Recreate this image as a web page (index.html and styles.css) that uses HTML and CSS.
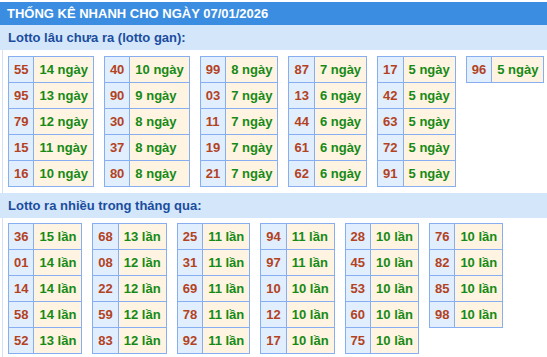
FILE: index.html
```html
<!DOCTYPE html>
<html lang="vi">
<head>
<meta charset="utf-8">
<title>Thống kê nhanh</title>
<link rel="stylesheet" href="styles.css">
</head>
<body>
<div class="title">THỐNG KÊ NHANH CHO NGÀY 07/01/2026</div>
<div class="box">
  <div class="sec-head">Lotto lâu chưa ra (lotto gan):</div>
  <div class="grid">
    <table class="tb"><tr><td class="n">55</td><td class="v">14 ngày</td></tr><tr><td class="n">95</td><td class="v">13 ngày</td></tr><tr><td class="n">79</td><td class="v">12 ngày</td></tr><tr><td class="n">15</td><td class="v">11 ngày</td></tr><tr><td class="n">16</td><td class="v">10 ngày</td></tr></table>
    <table class="tb"><tr><td class="n">40</td><td class="v">10 ngày</td></tr><tr><td class="n">90</td><td class="v">9 ngày</td></tr><tr><td class="n">30</td><td class="v">8 ngày</td></tr><tr><td class="n">37</td><td class="v">8 ngày</td></tr><tr><td class="n">80</td><td class="v">8 ngày</td></tr></table>
    <table class="tb"><tr><td class="n">99</td><td class="v">8 ngày</td></tr><tr><td class="n">03</td><td class="v">7 ngày</td></tr><tr><td class="n">11</td><td class="v">7 ngày</td></tr><tr><td class="n">19</td><td class="v">7 ngày</td></tr><tr><td class="n">21</td><td class="v">7 ngày</td></tr></table>
    <table class="tb"><tr><td class="n">87</td><td class="v">7 ngày</td></tr><tr><td class="n">13</td><td class="v">6 ngày</td></tr><tr><td class="n">44</td><td class="v">6 ngày</td></tr><tr><td class="n">61</td><td class="v">6 ngày</td></tr><tr><td class="n">62</td><td class="v">6 ngày</td></tr></table>
    <table class="tb"><tr><td class="n">17</td><td class="v">5 ngày</td></tr><tr><td class="n">42</td><td class="v">5 ngày</td></tr><tr><td class="n">63</td><td class="v">5 ngày</td></tr><tr><td class="n">72</td><td class="v">5 ngày</td></tr><tr><td class="n">91</td><td class="v">5 ngày</td></tr></table>
    <table class="tb"><tr><td class="n">96</td><td class="v">5 ngày</td></tr></table>
  </div>
  <div class="sec-head">Lotto ra nhiều trong tháng qua:</div>
  <div class="grid grid2">
    <table class="tb"><tr><td class="n">36</td><td class="v">15 lần</td></tr><tr><td class="n">01</td><td class="v">14 lần</td></tr><tr><td class="n">14</td><td class="v">14 lần</td></tr><tr><td class="n">58</td><td class="v">14 lần</td></tr><tr><td class="n">52</td><td class="v">13 lần</td></tr></table>
    <table class="tb"><tr><td class="n">68</td><td class="v">13 lần</td></tr><tr><td class="n">08</td><td class="v">12 lần</td></tr><tr><td class="n">22</td><td class="v">12 lần</td></tr><tr><td class="n">59</td><td class="v">12 lần</td></tr><tr><td class="n">83</td><td class="v">12 lần</td></tr></table>
    <table class="tb"><tr><td class="n">25</td><td class="v">11 lần</td></tr><tr><td class="n">31</td><td class="v">11 lần</td></tr><tr><td class="n">69</td><td class="v">11 lần</td></tr><tr><td class="n">78</td><td class="v">11 lần</td></tr><tr><td class="n">92</td><td class="v">11 lần</td></tr></table>
    <table class="tb"><tr><td class="n">94</td><td class="v">11 lần</td></tr><tr><td class="n">97</td><td class="v">11 lần</td></tr><tr><td class="n">10</td><td class="v">10 lần</td></tr><tr><td class="n">12</td><td class="v">10 lần</td></tr><tr><td class="n">17</td><td class="v">10 lần</td></tr></table>
    <table class="tb"><tr><td class="n">28</td><td class="v">10 lần</td></tr><tr><td class="n">45</td><td class="v">10 lần</td></tr><tr><td class="n">53</td><td class="v">10 lần</td></tr><tr><td class="n">60</td><td class="v">10 lần</td></tr><tr><td class="n">75</td><td class="v">10 lần</td></tr></table>
    <table class="tb"><tr><td class="n">76</td><td class="v">10 lần</td></tr><tr><td class="n">82</td><td class="v">10 lần</td></tr><tr><td class="n">85</td><td class="v">10 lần</td></tr><tr><td class="n">98</td><td class="v">10 lần</td></tr></table>
  </div>
</div>
</body>
</html>
```
FILE: styles.css
```css
html, body {
  margin: 0;
  padding: 0;
  background: #ffffff;
}
body {
  font-family: "Liberation Sans", Arial, sans-serif;
  font-size: 13px;
  font-weight: bold;
}
.title {
  margin-top: 2px;
  height: 23px;
  line-height: 23px;
  padding-left: 7px;
  background: #3a8de0;
  color: #ffffff;
  white-space: nowrap;
}
.box {
  border-left: 1px solid #d3e2f2;
  margin-left: 2px;
}
.sec-head {
  height: 25px;
  line-height: 25px;
  margin-left: -3px;
  padding-left: 8px;
  background: #d4e7fa;
  color: #1b4d9e;
}
.grid {
  display: flex;
  align-items: flex-start;
  gap: 10px;
  padding: 6px 0 6px 5px;
}
.grid2 {
  padding-top: 5px;
}
.tb {
  border-collapse: collapse;
  border: 1px solid #87aef0;
}
.tb td {
  border: 1px solid #87aef0;
  height: 25px;
  padding: 0 5px;
  line-height: 16px;
  white-space: nowrap;
}
.n {
  background: #e0eefd;
  color: #b3421f;
}
.v {
  background: #fff3e1;
  color: #168a16;
}
```
